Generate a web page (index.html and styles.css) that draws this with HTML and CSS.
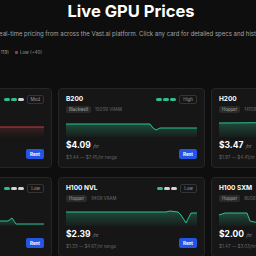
FILE: index.html
```html
<!DOCTYPE html>
<html>
<head>
<meta charset="utf-8">
<link rel="stylesheet" href="styles.css">
</head>
<body>
<header class="hero">
  <h1>Live GPU Prices</h1>
  <p>Real-time pricing from across the Vast.ai platform. Click any card for detailed specs and history.</p>
</header>
<div class="legend">
  <span class="leg"><i class="sw sw-high"></i>High (+62)</span>
  <span class="leg"><i class="sw sw-med"></i>Medium (+119)</span>
  <span class="leg"><i class="sw sw-low"></i>Low (+40)</span>
</div>
<main class="grid">
  <article class="card">
    <div class="head"><span class="name">RTX 5090</span><span class="avail"><span class="pills"><i class="on"></i><i class="on"></i><i></i></span><span class="lvl">Med</span></span></div>
    <div class="meta"><span class="arch">Blackwell</span><span class="vram">32GB VRAM</span></div>
    <svg class="spark" viewBox="0 0 131 20" preserveAspectRatio="none"><defs><linearGradient id="gr" x1="0" y1="0" x2="0" y2="1"><stop offset="0" stop-color="#c23a3a" stop-opacity=".22"/><stop offset="1" stop-color="#c23a3a" stop-opacity=".02"/></linearGradient></defs><path d="M0 10 L131 10 L131 20 L0 20 Z" fill="url(#gr)"/><path d="M0 10 L131 10" class="ln red"/></svg>
    <div class="foot"><div><div class="price">$0.69<span>/hr</span></div><div class="range">$0.35 — $1.20/hr range</div></div><button class="rent">Rent</button></div>
  </article>
  <article class="card">
    <div class="head"><span class="name">B200</span><span class="avail"><span class="pills"><i class="on"></i><i class="on"></i><i class="on"></i></span><span class="lvl">High</span></span></div>
    <div class="meta"><span class="arch">Blackwell</span><span class="vram">192GB VRAM</span></div>
    <svg class="spark" viewBox="0 0 131 20" preserveAspectRatio="none"><defs><linearGradient id="gg" x1="0" y1="0" x2="0" y2="1"><stop offset="0" stop-color="#2fbf8f" stop-opacity=".32"/><stop offset="1" stop-color="#2fbf8f" stop-opacity=".04"/></linearGradient></defs><path d="M0 7 L84 7 L87 11 L90 13 L94 11 L131 11 L131 20 L0 20 Z" fill="url(#gg)"/><path d="M0 7 L84 7 L87 11 L90 13 L94 11 L131 11" class="ln"/></svg>
    <div class="foot"><div><div class="price">$4.09<span>/hr</span></div><div class="range">$3.44 — $7.45/hr range</div></div><button class="rent">Rent</button></div>
  </article>
  <article class="card">
    <div class="head"><span class="name">H200</span><span class="avail"><span class="pills"><i class="on"></i><i class="on"></i><i class="on"></i></span><span class="lvl">High</span></span></div>
    <div class="meta"><span class="arch">Hopper</span><span class="vram">141GB VRAM</span></div>
    <svg class="spark" viewBox="0 0 131 20" preserveAspectRatio="none"><path d="M0 6 L131 5 L131 20 L0 20 Z" fill="url(#gg)"/><path d="M0 6 L131 5" class="ln"/></svg>
    <div class="foot"><div><div class="price">$3.47<span>/hr</span></div><div class="range">$1.97 — $4.41/hr range</div></div><button class="rent">Rent</button></div>
  </article>
  <article class="card">
    <div class="head"><span class="name">RTX 4090</span><span class="avail"><span class="pills"><i class="on"></i><i></i><i></i></span><span class="lvl">Low</span></span></div>
    <div class="meta"><span class="arch">Ada</span><span class="vram">24GB VRAM</span></div>
    <svg class="spark" viewBox="0 0 131 20" preserveAspectRatio="none"><path d="M0 15 L95 15 L99 12 L103 18 L131 18 L131 20 L0 20 Z" fill="url(#gg)"/><path d="M0 15 L95 15 L99 12 L103 18 L131 18" class="ln"/></svg>
    <div class="foot"><div><div class="price">$0.35<span>/hr</span></div><div class="range">$0.20 — $0.60/hr range</div></div><button class="rent">Rent</button></div>
  </article>
  <article class="card">
    <div class="head"><span class="name">H100 NVL</span><span class="avail"><span class="pills"><i class="on"></i><i></i><i></i></span><span class="lvl">Low</span></span></div>
    <div class="meta"><span class="arch">Hopper</span><span class="vram">94GB VRAM</span></div>
    <svg class="spark" viewBox="0 0 131 20" preserveAspectRatio="none"><path d="M0 6 L100 6 L104 5 L112 6 L115 9 L120 17 L125 7 L131 7 L131 20 L0 20 Z" fill="url(#gg)"/><path d="M0 6 L100 6 L104 5 L112 6 L115 9 L120 17 L125 7 L131 7" class="ln"/></svg>
    <div class="foot"><div><div class="price">$2.39<span>/hr</span></div><div class="range">$1.33 — $4.67/hr range</div></div><button class="rent">Rent</button></div>
  </article>
  <article class="card">
    <div class="head"><span class="name">H100 SXM</span><span class="avail"><span class="pills"><i class="on"></i><i class="on"></i><i></i></span><span class="lvl">Med</span></span></div>
    <div class="meta"><span class="arch">Hopper</span><span class="vram">80GB VRAM</span></div>
    <svg class="spark" viewBox="0 0 131 20" preserveAspectRatio="none"><path d="M0 9 L6 7 L28 7 L31 15 L40 17 L131 17 L131 20 L0 20 Z" fill="url(#gg)"/><path d="M0 9 L6 7 L28 7 L31 15 L40 17 L131 17" class="ln"/></svg>
    <div class="foot"><div><div class="price">$2.00<span>/hr</span></div><div class="range">$1.47 — $3.03/hr range</div></div><button class="rent">Rent</button></div>
  </article>
</main>
</body>
</html>
```
FILE: styles.css
```css
html, body {
  margin: 0;
  overflow: hidden;
  background: #0e0e0e;
}
body {
  width: 256px;
  height: 256px;
  font-family: Inter, "Noto Sans", sans-serif;
  color: #fff;
}
.hero {
  display: flex;
  flex-direction: column;
  align-items: center;
  padding-left: 6px;
}
.hero h1 {
  margin: 0;
  padding-top: 1px;
  font-size: 16.5px;
  line-height: 20px;
  font-weight: 700;
  white-space: nowrap;
}
.hero p {
  margin: 9px 0 0;
  font-size: 6px;
  line-height: 8px;
  color: #a3a3a3;
  white-space: nowrap;
}
.legend {
  display: flex;
  justify-content: flex-end;
  width: 42px;
  gap: 6px;
  margin-top: 11px;
  font-size: 4.5px;
  line-height: 7px;
  color: #9a9a9a;
  white-space: nowrap;
}
.leg {
  display: flex;
  align-items: center;
  gap: 2px;
}
.sw {
  width: 3px;
  height: 3px;
  border-radius: 1px;
}
.sw-high { background: #2fbf8f; }
.sw-med { background: #d6a52b; }
.sw-low { background: #b0304a; }
.grid {
  display: grid;
  grid-template-columns: repeat(3, 147px);
  gap: 9px 6px;
  margin: 32px 0 0 -95px;
}
.card {
  box-sizing: border-box;
  background: #161616;
  border: 1px solid #262626;
  border-radius: 4px;
  padding: 5px 7px 6px;
  display: flex;
  flex-direction: column;
}
.head {
  display: flex;
  justify-content: space-between;
  align-items: center;
  height: 10px;
}
.name {
  font-size: 6.5px;
  font-weight: 700;
}
.avail {
  display: flex;
  align-items: center;
  gap: 3px;
}
.pills {
  display: flex;
  gap: 1px;
}
.pills i {
  width: 6px;
  height: 3px;
  border-radius: 2px;
  background: #d4d4d4;
}
.pills i.on { background: #2fbf8f; }
.lvl {
  border: 1px solid #333;
  border-radius: 2px;
  padding: 0 3px;
  font-size: 4.5px;
  line-height: 7px;
  color: #9a9a9a;
}
.meta {
  display: flex;
  align-items: center;
  gap: 4px;
  margin-top: 2px;
  font-size: 4.3px;
}
.arch {
  background: #2a2a2a;
  border-radius: 2px;
  padding: 1px 3px;
  line-height: 5px;
  color: #a8a8a8;
}
.vram { color: #6f6f6f; }
.spark {
  display: block;
  width: 100%;
  height: 20px;
  margin-top: 4px;
}
.ln {
  fill: none;
  stroke: #2fbf8f;
  stroke-width: 1;
  vector-effect: non-scaling-stroke;
}
.ln.red { stroke: #c23a3a; }
.foot {
  display: flex;
  justify-content: space-between;
  align-items: flex-end;
  margin-top: 3px;
}
.price {
  font-size: 8.5px;
  font-weight: 700;
  line-height: 11px;
}
.price span {
  font-size: 4.5px;
  font-weight: 400;
  color: #8a8a8a;
  margin-left: 2px;
}
.range {
  margin-top: 3px;
  font-size: 4.5px;
  line-height: 6px;
  color: #6a6a6a;
}
.rent {
  width: 18px;
  height: 10px;
  margin-bottom: 2px;
  padding: 0;
  border: 0;
  border-radius: 2px;
  background: #2454e6;
  color: #fff;
  font-family: inherit;
  font-size: 4.5px;
  font-weight: 700;
}
```
